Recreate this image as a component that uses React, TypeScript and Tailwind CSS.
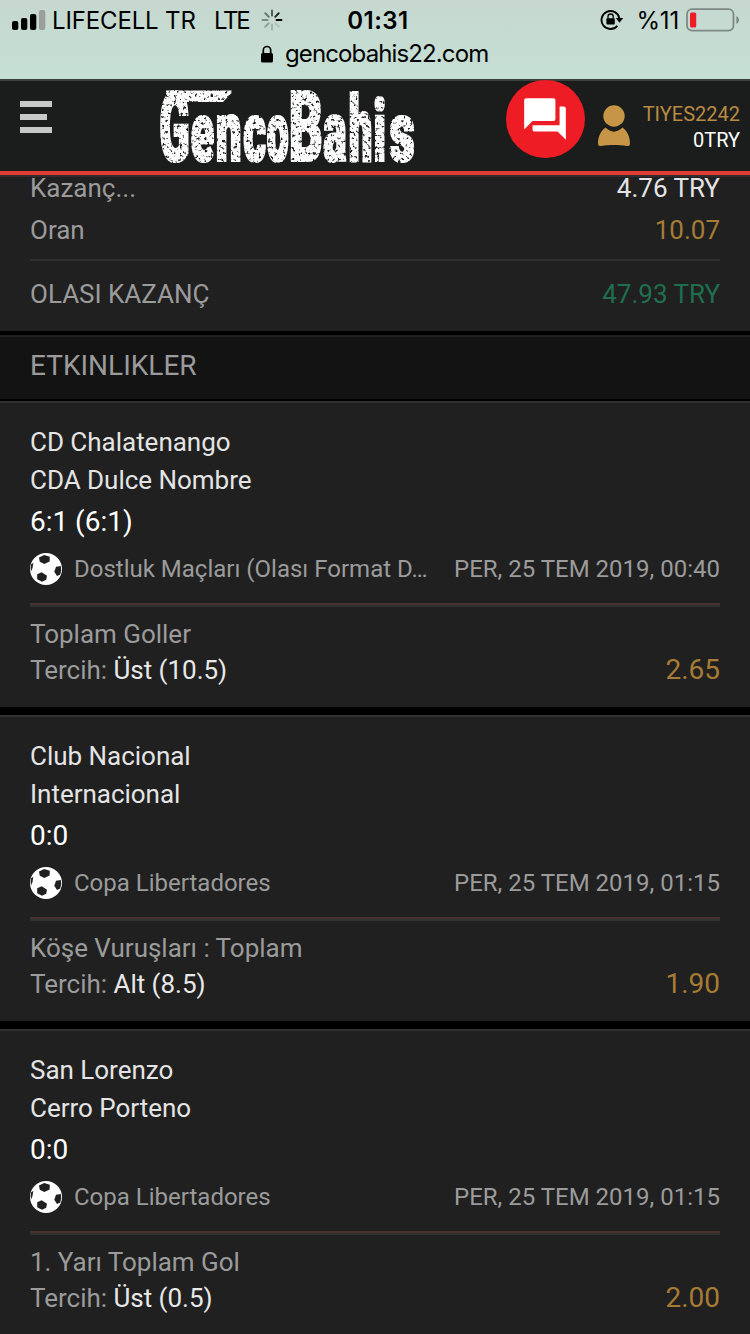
import React from "react";
import { MdForum } from "react-icons/md";

const spokes = [
  { a: 0, c: "#4d5652" },
  { a: 45, c: "#1f2422" },
  { a: 90, c: "#000000" },
  { a: 135, c: "#b3c2bb" },
  { a: 180, c: "#a3b0aa" },
  { a: 225, c: "#919d98" },
  { a: 270, c: "#7d8883" },
  { a: 315, c: "#69736e" },
];

function StatusBar() {
  return (
    <div className="h-[79px] shrink-0 bg-linear-to-b from-[#c6d8d0] to-[#c5dfd4] font-['Inter','Liberation_Sans',sans-serif] text-2xl text-black">
      <div className="grid h-10 grid-cols-[346px_64px_1fr]">
        <div className="flex items-center pl-3">
          <svg width="34" height="20" viewBox="0 0 34 20" className="mr-[6px] shrink-0">
            <rect x="0" y="11" width="6.3" height="9" rx="2" />
            <rect x="9" y="8" width="6.3" height="12" rx="2" />
            <rect x="18" y="4" width="6.3" height="16" rx="2" />
            <rect x="27" y="0" width="6.3" height="20" rx="2" fill="#9a9f9d" />
          </svg>
          <span className="w-[162px] pt-0.5 whitespace-nowrap tracking-[-0.15px]">LIFECELL TR</span>
          <span className="w-[47px] pt-0.5 whitespace-nowrap tracking-[-2.2px]">LTE</span>
          <svg width="22" height="22" viewBox="-11 -11 22 22">
            {spokes.map((s) => (
              <path key={s.a} d="M0-4.5V-9.5" stroke={s.c} strokeWidth="1.9" strokeLinecap="round" transform={`rotate(${s.a})`} />
            ))}
          </svg>
        </div>
        <div className="flex items-center justify-center pt-0.5 font-semibold">
          <span className="whitespace-nowrap tracking-[0.5px]">01:31</span>
        </div>
        <div className="flex items-center justify-end pr-2.5">
          <svg width="24" height="22" viewBox="0 0 24 22" className="mr-[13px]" fill="none">
            <path d="M17.4 16.8A9 9 0 1 1 19.3 9" stroke="#000" strokeWidth="1.9" />
            <path d="M15.8 9h7.4l-3.7 4.8z" fill="#000" />
            <rect x="6.4" y="9.3" width="8.4" height="6.2" rx="1" fill="#000" />
            <path d="M8 9.6V7.6a2.6 2.6 0 0 1 5.2 0v2" stroke="#000" strokeWidth="1.3" />
          </svg>
          <span className="mr-[7px] pt-0.5 whitespace-nowrap tracking-[-0.2px]">%11</span>
          <svg width="54" height="24" viewBox="0 0 54 24" fill="none">
            <rect x="1" y="1.2" width="46.5" height="21.4" rx="5" stroke="#7e8985" strokeWidth="1.8" />
            <rect x="4" y="4.6" width="6.2" height="14.8" rx="1.5" fill="#ee1c25" />
            <path d="M50.3 8.2c3.6 1.2 3.6 6.4 0 7.6z" fill="#7e8985" />
          </svg>
        </div>
      </div>
      <div className="flex h-7 items-center pl-[261px]">
        <svg width="12" height="18" viewBox="0 0 12 18" className="mr-3">
          <rect x="0" y="8" width="12" height="9.4" rx="1.5" />
          <path d="M2.3 8.6V5.2a3.7 3.7 0 0 1 7.4 0v3.4" fill="none" stroke="#000" strokeWidth="1.7" />
        </svg>
        <span className="whitespace-nowrap tracking-[-0.88px]">gencobahis22.com</span>
      </div>
    </div>
  );
}

const logoLetters = [
  { c: "G", x: 0.5, sx: 0.44, sy: 0.96 },
  { c: "e", x: 32, sx: 0.42, sy: 0.84 },
  { c: "n", x: 57, sx: 0.45, sy: 0.86 },
  { c: "c", x: 84.5, sx: 0.43, sy: 0.84 },
  { c: "o", x: 108, sx: 0.38, sy: 0.84 },
  { c: "B", x: 130, sx: 0.52, sy: 0.98 },
  { c: "a", x: 164.5, sx: 0.43, sy: 0.85 },
  { c: "h", x: 190, sx: 0.41, sy: 0.92 },
  { c: "i", x: 214.5, sx: 0.45, sy: 0.85 },
  { c: "s", x: 230.5, sx: 0.49, sy: 0.84 },
];

function Logo() {
  return (
    <svg width="258" height="76" viewBox="0 0 258 76" className="mt-2 ml-[107px] shrink-0 overflow-visible">
      <defs>
        <filter id="worn" x="-5" y="-5" width="268" height="86" filterUnits="userSpaceOnUse" colorInterpolationFilters="sRGB">
          <feMorphology in="SourceGraphic" operator="dilate" radius="1 0.5" result="bold" />
          <feTurbulence type="fractalNoise" baseFrequency="0.33" numOctaves="3" seed="23" />
          <feColorMatrix values="0 0 0 0 0  0 0 0 0 0  0 0 0 0 0  6 0 0 0 -3.5" result="specks" />
          <feComposite in="bold" in2="specks" operator="out" />
        </filter>
      </defs>
      <g filter="url(#worn)" fill="#fbfbfb" fontFamily="Roboto, sans-serif" fontWeight="900" fontSize="100">
        {logoLetters.map((l) => (
          <text key={l.c} transform={`translate(${l.x} 72) scale(${l.sx} ${l.sy})`}>
            {l.c}
          </text>
        ))}
        <path d="M8 2.500H72L63 12H8Z" />
      </g>
    </svg>
  );
}

function Header() {
  return (
    <header className="flex h-24 shrink-0 items-start border-t-2 border-b-4 border-t-[#3b403e] border-b-[#dc3c33] bg-[#1b1d1c] font-['Roboto',sans-serif]">
      <div className="mt-5 ml-5 flex w-8 shrink-0 flex-col gap-[7px]">
        <div className="h-1.5 w-8 bg-[#c6c9c7]" />
        <div className="h-1.5 w-[27px] bg-[#c6c9c7]" />
        <div className="h-1.5 w-8 bg-[#c6c9c7]" />
      </div>
      <Logo />
      <div className="-mt-px ml-[89px] flex h-[78px] w-[79px] shrink-0 items-center justify-center rounded-full bg-[#ee1c24] pr-0.5">
        <MdForum className="size-[50px] text-white" />
      </div>
      <svg width="32" height="42" viewBox="0 0 32 42" className="mt-6 ml-[13px] shrink-0" fill="#c69545">
        <circle cx="16" cy="11" r="10.700" />
        <path d="M7.500 22.500C13 28 19 28 24.500 22.500C29.500 26 32 32 32 38.500C32 40.500 31 41 29 41C21 39.800 11 39.800 3 41C1 41 0 40.500 0 38.500C0 32 2.500 26 7.500 22.500Z" />
      </svg>
      <div className="mt-5 mr-2.5 ml-auto text-right text-xl leading-[26px]">
        <div className="text-[#b98a42]">TIYES2242</div>
        <div className="text-white">0TRY</div>
      </div>
    </header>
  );
}

function Ball() {
  return (
    <svg width="32" height="32" viewBox="0 0 32 32" className="mr-3 shrink-0">
      <circle cx="16" cy="16" r="16" fill="#fff" />
      <g fill="#202020">
        <path d="M9 4.500L14.200 2L19.800 3.800L19.600 8.600L14.300 11L9.800 8.800Z" />
        <path d="M7.200 21.300L11.700 19.300L17 22.700L16.200 26.800L12 28.800L7.200 26.300Z" />
        <path d="M30.800 13L26 13.700L24.300 18.700L27 22.900L30.300 21.500Q31.800 17 30.800 13Z" />
        <path d="M1.200 11L3.300 10L2.500 15L1 18.500Q.2 15 1.200 11Z" />
      </g>
    </svg>
  );
}

type Bet = {
  home: string;
  away: string;
  score: string;
  league: string;
  date: string;
  market: string;
  pick: string;
  odds: string;
};

const bets: Bet[] = [
  {
    home: "CD Chalatenango",
    away: "CDA Dulce Nombre",
    score: "6:1 (6:1)",
    league: "Dostluk Maçları (Olası Format D…",
    date: "PER, 25 TEM 2019, 00:40",
    market: "Toplam Goller",
    pick: "Üst (10.5)",
    odds: "2.65",
  },
  {
    home: "Club Nacional",
    away: "Internacional",
    score: "0:0",
    league: "Copa Libertadores",
    date: "PER, 25 TEM 2019, 01:15",
    market: "Köşe Vuruşları : Toplam",
    pick: "Alt (8.5)",
    odds: "1.90",
  },
  {
    home: "San Lorenzo",
    away: "Cerro Porteno",
    score: "0:0",
    league: "Copa Libertadores",
    date: "PER, 25 TEM 2019, 01:15",
    market: "1. Yarı Toplam Gol",
    pick: "Üst (0.5)",
    odds: "2.00",
  },
];

function BetCard({ bet }: { bet: Bet }) {
  return (
    <article className="h-[314px] shrink-0 border-t-2 border-b-8 border-t-[#303030] border-b-black bg-[#202020] px-[30px] pt-5 text-[26px] tracking-[-0.02px] whitespace-nowrap text-[#9b9b9b]">
      <div className="leading-[38px] text-[#e4e4e4]">
        <div>{bet.home}</div>
        <div>{bet.away}</div>
      </div>
      <div className="text-[28px] leading-[46px] text-white">{bet.score}</div>
      <div className="mt-2 flex h-8 items-center text-2xl tracking-normal">
        <Ball />
        <span>{bet.league}</span>
        <span className="ml-auto">{bet.date}</span>
      </div>
      <div className="mt-[18px] h-1 border-t-2 border-t-[#463030] bg-[#303030]" />
      <div className="mt-[9px] leading-9">{bet.market}</div>
      <div className="flex justify-between leading-9">
        <span>
          Tercih: <span className="text-[#e8e8e8]">{bet.pick}</span>
        </span>
        <span className="text-[28px] text-[#a67c35]">{bet.odds}</span>
      </div>
    </article>
  );
}

export default function App() {
  return (
    <div className="flex h-[1334px] w-[750px] flex-col overflow-hidden bg-black">
      <StatusBar />
      <Header />
      <main className="flex flex-col font-['Roboto',sans-serif]">
        <section className="h-[156px] shrink-0 border-t-2 border-[#352b2b] bg-[#202020] px-[30px] text-[26px] text-[#9b9b9b]">
          <div className="flex h-[22px] justify-between leading-[22px]">
            <span>Kazanç...</span>
            <span className="text-[#e4e4e4]">4.76 TRY</span>
          </div>
          <div className="mt-2.5 flex justify-between leading-[42px]">
            <span>Oran</span>
            <span className="text-[#a67c35]">10.07</span>
          </div>
          <div className="mt-2 h-0.5 bg-[#303030]" />
          <div className="mt-3 flex justify-between leading-[42px]">
            <span>OLASI KAZANÇ</span>
            <span className="text-[#1f6f4e]">47.93 TRY</span>
          </div>
        </section>
        <h2 className="mt-1 mb-0.5 h-16 shrink-0 border-t-2 border-[#202020] bg-[#131313] px-[30px] text-[28px] leading-[57px] text-[#9b9b9b]">
          ETKINLIKLER
        </h2>
        {bets.map((bet) => (
          <BetCard key={bet.home} bet={bet} />
        ))}
      </main>
    </div>
  );
}
